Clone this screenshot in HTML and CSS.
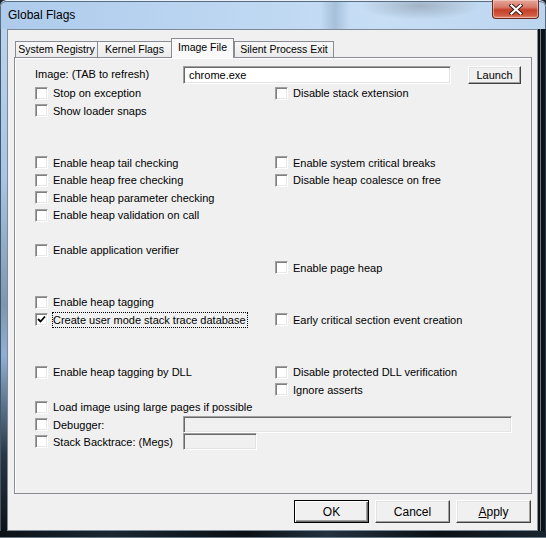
FILE: index.html
```html
<!DOCTYPE html>
<html>
<head>
    <title>Global Flags</title>
    <link rel="stylesheet" href="styles.css">
</head>
<body>
    <div class="window">
        <div class="titlebar">
            <span class="title">Global Flags</span>
            <div class="close-button">
                <svg width="14" height="11" viewBox="0 0 14 11">
                    <path d="M2.5 1.5 L11.5 9.5 M11.5 1.5 L2.5 9.5" stroke="#3a1a14" stroke-width="4" stroke-linecap="square"/>
                    <path d="M2.5 1.5 L11.5 9.5 M11.5 1.5 L2.5 9.5" stroke="#ffffff" stroke-width="2.2" stroke-linecap="square"/>
                </svg>
            </div>
        </div>
        <div class="middle">
            <div class="frame-left"></div>
            <div class="client">
                <div class="tabs">
                    <div class="tab registry">System Registry</div>
                    <div class="tab kernel">Kernel Flags</div>
                    <div class="tab selected">Image File</div>
                    <div class="tab silent">Silent Process Exit</div>
                </div>
                <div class="panel">
                    <div class="image-row">
                        <span class="image-label">Image: (TAB to refresh)</span>
                        <div class="edit">chrome.exe</div>
                        <div class="button launch">Launch</div>
                    </div>
                    <div class="flags">
                        <div class="row">
                            <div class="cell"><span class="box"></span><span class="text">Stop on exception</span></div>
                            <div class="cell"><span class="box"></span><span class="text">Disable stack extension</span></div>
                        </div>
                        <div class="row">
                            <div class="cell"><span class="box"></span><span class="text">Show loader snaps</span></div>
                        </div>
                        <div class="row"></div>
                        <div class="row"></div>
                        <div class="row">
                            <div class="cell"><span class="box"></span><span class="text">Enable heap tail checking</span></div>
                            <div class="cell"><span class="box"></span><span class="text">Enable system critical breaks</span></div>
                        </div>
                        <div class="row">
                            <div class="cell"><span class="box"></span><span class="text">Enable heap free checking</span></div>
                            <div class="cell"><span class="box"></span><span class="text">Disable heap coalesce on free</span></div>
                        </div>
                        <div class="row">
                            <div class="cell"><span class="box"></span><span class="text">Enable heap parameter checking</span></div>
                        </div>
                        <div class="row">
                            <div class="cell"><span class="box"></span><span class="text">Enable heap validation on call</span></div>
                        </div>
                        <div class="row"></div>
                        <div class="row">
                            <div class="cell"><span class="box"></span><span class="text">Enable application verifier</span></div>
                        </div>
                        <div class="row">
                            <div class="cell"></div>
                            <div class="cell"><span class="box"></span><span class="text">Enable page heap</span></div>
                        </div>
                        <div class="row"></div>
                        <div class="row">
                            <div class="cell"><span class="box"></span><span class="text">Enable heap tagging</span></div>
                        </div>
                        <div class="row">
                            <div class="cell">
                                <span class="box checked">
                                    <svg width="9" height="9" viewBox="0 0 9 9">
                                        <path d="M1 4 L3.5 6.5 L8 1.5" fill="none" stroke="#000" stroke-width="1.8"/>
                                    </svg>
                                </span>
                                <span class="text focus">Create user mode stack trace database</span>
                            </div>
                            <div class="cell"><span class="box"></span><span class="text">Early critical section event creation</span></div>
                        </div>
                        <div class="row"></div>
                        <div class="row"></div>
                        <div class="row">
                            <div class="cell"><span class="box"></span><span class="text">Enable heap tagging by DLL</span></div>
                            <div class="cell"><span class="box"></span><span class="text">Disable protected DLL verification</span></div>
                        </div>
                        <div class="row">
                            <div class="cell"></div>
                            <div class="cell"><span class="box"></span><span class="text">Ignore asserts</span></div>
                        </div>
                        <div class="row">
                            <div class="cell wide"><span class="box"></span><span class="text">Load image using large pages if possible</span></div>
                        </div>
                        <div class="row">
                            <div class="cell label-cell"><span class="box"></span><span class="text">Debugger:</span></div>
                            <div class="field debugger"></div>
                        </div>
                        <div class="row">
                            <div class="cell label-cell"><span class="box"></span><span class="text">Stack Backtrace: (Megs)</span></div>
                            <div class="field backtrace"></div>
                        </div>
                    </div>
                </div>
                <div class="dialog-buttons">
                    <div class="button default">OK</div>
                    <div class="button">Cancel</div>
                    <div class="button"><u>A</u>pply</div>
                </div>
            </div>
            <div class="frame-right"></div>
        </div>
        <div class="frame-bottom"></div>
    </div>
</body>
</html>
```

FILE: styles.css
```css
body {
    margin: 0;
    font-family: "Liberation Sans", Arial, sans-serif;
    font-size: 11px;
    color: #000;
    background: #1a232c;
}
.window {
    width: 546px;
    height: 538px;
    display: flex;
    flex-direction: column;
    border-radius: 6px 6px 0 0;
    overflow: hidden;
    box-sizing: border-box;
    box-shadow: inset 0 0 0 1px #3d4d60;
}

/* glass title bar */
.titlebar {
    height: 29px;
    display: flex;
    align-items: flex-start;
    background:
        radial-gradient(ellipse 60px 14px at 420px 6px, rgba(120, 130, 140, 0.45), rgba(120, 130, 140, 0)),
        linear-gradient(to right, rgba(0, 0, 0, 0) 320px, rgba(110, 140, 170, 0.35) 335px, rgba(0, 0, 0, 0) 350px),
        linear-gradient(to right, #aecbec, #bcd6f1 40%, #c7def5 70%, #bcd5ef);
    border-radius: 6px 6px 0 0;
    box-shadow: inset 0 1px 0 #e6f0fa, inset 1px 0 0 #5a6c80, inset -1px 0 0 #5a6c80, inset 0 2px 0 #5a6c80;
}
.title {
    font-size: 12px;
    margin: 8px 0 0 8px;
    line-height: 14px;
}
.close-button {
    margin-left: auto;
    margin-right: 7px;
    width: 47px;
    height: 19px;
    box-sizing: border-box;
    border: 1px solid #6b2a20;
    border-top: none;
    border-radius: 0 0 4px 4px;
    background: linear-gradient(to bottom, #e4a79b, #d77a68 40%, #c5402a 55%, #d05a40 85%, #e2907a);
    box-shadow: inset 0 0 0 1px rgba(255, 220, 210, 0.5);
    display: flex;
    align-items: center;
    justify-content: center;
}

.middle {
    display: flex;
    height: 502px;
}
.frame-left {
    width: 7px;
    background:
        linear-gradient(to right, #44566a 1px, rgba(0, 0, 0, 0) 1px),
        linear-gradient(to bottom, #bad3ee, #a7c4e6 30%, #7d96b0 55%, #8fb0d6 65%, #2a3644 85%, #0d1319);
}
.frame-right {
    flex: 1;
    background:
        linear-gradient(to right, #0b1015 2px, #6e7b88 2px, #6e7b88 3px, #0d1217 3px, #0d1217 7px, #2c3946 7px),
        linear-gradient(to bottom, #bcd5ef, #1a232d 10%);
}
.frame-bottom {
    height: 7px;
    background: linear-gradient(to right, #0c1116, #1b2731 20%, #0a0f14 45%, #243340 60%, #0b1014 80%, #1a242e);
    box-shadow: inset 0 -1px 0 #6a7988;
}

/* dialog client area */
.client {
    width: 531px;
    box-sizing: border-box;
    border: 1px solid #7d8b99;
    background: #f0f0f0;
    padding: 8px 6px 0 6px;
}
.tabs {
    display: flex;
    align-items: flex-end;
    height: 19px;
    padding-left: 1px;
}
.tab {
    height: 16px;
    line-height: 15px;
    box-sizing: border-box;
    border: 1px solid #898c95;
    border-bottom: none;
    background: linear-gradient(to bottom, #f7f7f7, #ebebeb);
    margin-right: -1px;
    font-size: 10.5px;
    text-align: center;
}
.tab.registry {
    width: 83px;
}
.tab.kernel {
    width: 75px;
}
.tab.silent {
    width: 100px;
}
.tab.selected {
    width: 63px;
    height: 20px;
    line-height: 17px;
    margin: 0 0 -1px 0;
    background: #f9f9f9;
    position: relative;
}
.panel {
    width: 518px;
    height: 437px;
    box-sizing: border-box;
    border: 1px solid #898c95;
    background: #f0f0f0;
    box-shadow: inset 1px 1px 0 #ffffff;
    padding: 8px 0 0 20px;
}

.image-row {
    display: flex;
    align-items: center;
    height: 18px;
}
.image-label {
    width: 148px;
    padding-bottom: 2px;
}
.edit, .field {
    box-sizing: border-box;
    border: 1px solid;
    border-color: #a0a0a0 #ffffff #ffffff #a0a0a0;
    box-shadow: inset 1px 1px 0 #696969, inset -1px -1px 0 #e3e3e3;
}
.edit {
    width: 268px;
    height: 18px;
    background: #fff;
    padding: 1px 0 0 5px;
    line-height: 14px;
}
.field {
    height: 17px;
    background: #f0f0f0;
}
.debugger {
    width: 329px;
}
.backtrace {
    width: 74px;
}

.button {
    box-sizing: border-box;
    background: #f0f0f0;
    border: 1px solid;
    border-color: #ffffff #404040 #404040 #ffffff;
    box-shadow: inset -1px -1px 0 #a0a0a0, inset 1px 1px 0 #e3e3e3;
    display: flex;
    align-items: center;
    justify-content: center;
}
.launch {
    width: 53px;
    height: 18px;
    margin-left: 17px;
}

/* checkbox rows */
.flags {
    display: flex;
    flex-direction: column;
    padding-top: 0.5px;
}
.row {
    display: flex;
    align-items: center;
    height: 17.45px;
}
.cell {
    width: 240px;
    display: flex;
    align-items: center;
}
.cell.wide {
    width: 400px;
}
.cell.label-cell {
    width: 148px;
}
.box {
    width: 13px;
    height: 13px;
    box-sizing: border-box;
    border: 1px solid;
    border-color: #a0a0a0 #ffffff #ffffff #a0a0a0;
    box-shadow: inset 1px 1px 0 #808080, inset -1px -1px 0 #e8e8e8;
    background: #fff;
    margin-right: 4px;
    display: flex;
    align-items: center;
    justify-content: center;
}
.text {
    line-height: 14px;
    border: 1px solid transparent;
    padding-right: 1px;
}
.text.focus {
    border: 1px dotted #000;
}

.dialog-buttons {
    display: flex;
    justify-content: flex-end;
    gap: 6px;
    margin-top: 6px;
}
.dialog-buttons .button {
    width: 75px;
    height: 23px;
    font-size: 12px;
}
.button.default {
    border-color: #000;
    box-shadow: inset 1px 1px 0 #ffffff, inset -1px -1px 0 #696969, inset -2px -2px 0 #a0a0a0;
}
```
